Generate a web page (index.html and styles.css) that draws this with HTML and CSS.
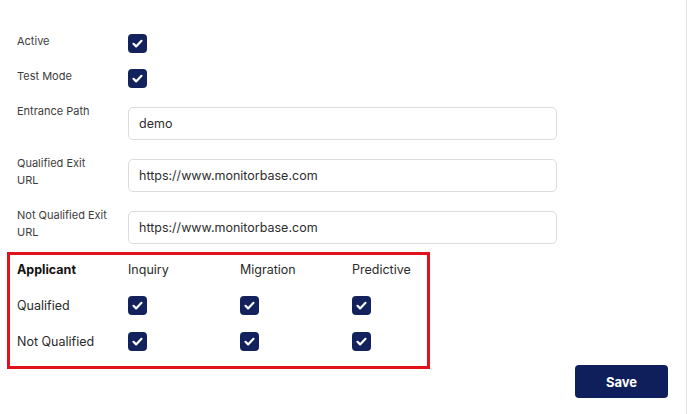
FILE: index.html
```html
<!DOCTYPE html>
<html lang="en">

<head>
  <meta charset="UTF-8">
  <meta name="viewport" content="width=device-width, initial-scale=1.0">
  <title>Settings</title>
  <link rel="stylesheet" href="styles.css">
</head>

<body>
  <div class="page">

    <div class="row row-check first">
      <label class="label">Active</label>
      <span class="check"><svg viewBox="0 0 19 19"><path d="M5.5 9.8l2.6 2.6 5.4-5.6" /></svg></span>
    </div>

    <div class="row row-check second">
      <label class="label">Test Mode</label>
      <span class="check"><svg viewBox="0 0 19 19"><path d="M5.5 9.8l2.6 2.6 5.4-5.6" /></svg></span>
    </div>

    <div class="row row-input">
      <label class="label">Entrance Path</label>
      <input type="text" class="field" value="demo" />
    </div>

    <div class="row row-input">
      <label class="label">Qualified Exit<br>URL</label>
      <input type="text" class="field" value="https://www.monitorbase.com" />
    </div>

    <div class="row row-input last">
      <label class="label">Not Qualified Exit<br>URL</label>
      <input type="text" class="field" value="https://www.monitorbase.com" />
    </div>

    <div class="matrix">
      <div class="matrix-head">
        <span class="cell-label"><b>Applicant</b></span>
        <span class="cell">Inquiry</span>
        <span class="cell">Migration</span>
        <span class="cell">Predictive</span>
      </div>
      <div class="matrix-row">
        <span class="cell-label">Qualified</span>
        <span class="cell"><span class="check"><svg viewBox="0 0 19 19"><path d="M5.5 9.8l2.6 2.6 5.4-5.6" /></svg></span></span>
        <span class="cell"><span class="check"><svg viewBox="0 0 19 19"><path d="M5.5 9.8l2.6 2.6 5.4-5.6" /></svg></span></span>
        <span class="cell"><span class="check"><svg viewBox="0 0 19 19"><path d="M5.5 9.8l2.6 2.6 5.4-5.6" /></svg></span></span>
      </div>
      <div class="matrix-row">
        <span class="cell-label">Not Qualified</span>
        <span class="cell"><span class="check"><svg viewBox="0 0 19 19"><path d="M5.5 9.8l2.6 2.6 5.4-5.6" /></svg></span></span>
        <span class="cell"><span class="check"><svg viewBox="0 0 19 19"><path d="M5.5 9.8l2.6 2.6 5.4-5.6" /></svg></span></span>
        <span class="cell"><span class="check"><svg viewBox="0 0 19 19"><path d="M5.5 9.8l2.6 2.6 5.4-5.6" /></svg></span></span>
      </div>
    </div>

    <div class="actions">
      <button class="save">Save</button>
    </div>

  </div>
</body>

</html>
```

FILE: styles.css
```css
body {
  margin: 0;
  font-family: Inter, "Noto Sans", sans-serif;
  color: #333;
  background: #fff;
}

.page {
  width: 687px;
  height: 414px;
  border-right: 1px solid #e4e4e4;
  padding-top: 34px;
  box-sizing: border-box;
}

.row {
  display: flex;
  align-items: flex-start;
  padding-left: 17px;
}

.label {
  width: 111px;
  flex-shrink: 0;
  font-size: 11px;
  line-height: 17px;
  color: #3d3d3d;
}

.row-check .label {
  margin-top: -1px;
}

.row-check.first {
  margin-bottom: 16px;
}

.row-check.second {
  margin-bottom: 19px;
}

.row-input {
  margin-bottom: 19px;
}

.row-input.last {
  margin-bottom: 8px;
}

.row-input .label {
  margin-top: -4px;
}

.field {
  width: 429px;
  height: 33px;
  box-sizing: border-box;
  border: 1px solid #dcdcdc;
  border-radius: 5px;
  padding: 0 10px;
  font-family: Inter, "Noto Sans", sans-serif;
  font-size: 12.5px;
  color: #2e2e2e;
  outline: none;
}

.check {
  display: inline-block;
  width: 19px;
  height: 19px;
  border-radius: 4px;
  background-color: #13225c;
}

.check svg {
  display: block;
  width: 19px;
  height: 19px;
  fill: none;
  stroke: #fff;
  stroke-width: 2.2;
  stroke-linecap: round;
  stroke-linejoin: round;
}

.matrix {
  width: 423px;
  margin-left: 7px;
  border: 3px solid #e1121b;
  box-sizing: border-box;
  padding: 0 0 7px 7px;
  font-size: 12.5px;
  color: #2b2b2b;
}

.matrix-head,
.matrix-row {
  display: flex;
  align-items: center;
}

.matrix-head {
  height: 28px;
  margin-bottom: 4px;
}

.matrix-row {
  height: 36px;
}

.cell-label {
  width: 111px;
  flex: none;
}

.cell-label b {
  color: #111;
  font-weight: 700;
}

.cell {
  width: 112px;
  flex: none;
  display: flex;
  align-items: center;
}

.cell:last-child {
  width: auto;
  flex: 1;
}

.actions {
  display: flex;
  justify-content: flex-end;
  padding-right: 18px;
  margin-top: -4px;
}

.save {
  width: 93px;
  height: 33px;
  border: none;
  border-radius: 4px;
  background-color: #0f1f5c;
  color: #fff;
  font-family: Inter, "Noto Sans", sans-serif;
  font-size: 13px;
  font-weight: 700;
  cursor: pointer;
}
```
